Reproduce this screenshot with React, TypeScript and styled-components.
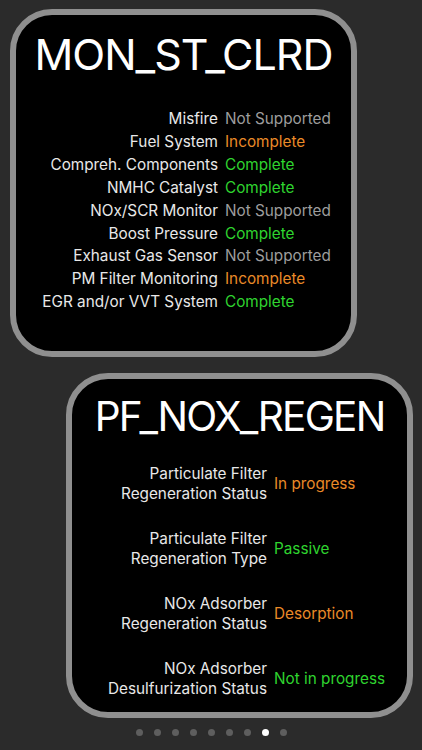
import styled, { createGlobalStyle } from 'styled-components';

const GlobalStyle = createGlobalStyle`
  html, body {
    margin: 0;
    padding: 0;
    background: #2b2b2b;
  }
  body {
    font-family: Inter, "Noto Sans", sans-serif;
    -webkit-font-smoothing: antialiased;
  }
`;

type Status = 'ok' | 'warn' | 'na';

const statusColors: Record<Status, string> = {
  ok: '#2fd42f',
  warn: '#ea8a28',
  na: '#9d9d9d',
};

const Page = styled.div`
  width: 422px;
  height: 750px;
  display: flex;
  flex-direction: column;
  overflow: hidden;
`;

const Card = styled.section<{ $left: number; $top: number; $height: number }>`
  box-sizing: border-box;
  width: 347px;
  height: ${(p) => p.$height}px;
  margin-top: ${(p) => p.$top}px;
  margin-left: ${(p) => p.$left}px;
  border: 6px solid #8f8f8f;
  border-radius: 42px;
  background: #000;
  display: flex;
  flex-direction: column;
  align-items: stretch;
`;

const Title = styled.h1<{ $size: number; $pad: number; $track: number }>`
  margin: 0;
  padding-top: ${(p) => p.$pad}px;
  font-size: ${(p) => p.$size}px;
  line-height: 1;
  font-weight: 400;
  color: #fff;
  text-align: center;
  letter-spacing: ${(p) => p.$track}px;
  white-space: nowrap;
`;

const Table = styled.div<{ $labelWidth: number; $top: number; $gap: number }>`
  display: grid;
  grid-template-columns: ${(p) => p.$labelWidth}px 1fr;
  column-gap: 7px;
  row-gap: ${(p) => p.$gap}px;
  margin-top: ${(p) => p.$top}px;
  align-items: center;
`;

const Label = styled.div<{ $lh: number }>`
  text-align: right;
  color: #e8e8e8;
  font-size: 15.3px;
  line-height: ${(p) => p.$lh}px;
  white-space: pre-line;
`;

const Value = styled.div<{ $status: Status; $lh: number }>`
  color: ${(p) => statusColors[p.$status]};
  font-size: 15.3px;
  line-height: ${(p) => p.$lh}px;
  white-space: nowrap;
`;

const Dots = styled.div`
  display: flex;
  justify-content: center;
  gap: 11px;
  margin-top: 11px;
`;

const Dot = styled.span<{ $active?: boolean }>`
  width: 7px;
  height: 7px;
  border-radius: 50%;
  background: ${(p) => (p.$active ? '#fff' : '#5e5e5e')};
`;

const monitors: [string, string, Status][] = [
  ['Misfire', 'Not Supported', 'na'],
  ['Fuel System', 'Incomplete', 'warn'],
  ['Compreh. Components', 'Complete', 'ok'],
  ['NMHC Catalyst', 'Complete', 'ok'],
  ['NOx/SCR Monitor', 'Not Supported', 'na'],
  ['Boost Pressure', 'Complete', 'ok'],
  ['Exhaust Gas Sensor', 'Not Supported', 'na'],
  ['PM Filter Monitoring', 'Incomplete', 'warn'],
  ['EGR and/or VVT System', 'Complete', 'ok'],
];

const regen: [string, string, Status][] = [
  ['Particulate Filter\nRegeneration Status', 'In progress', 'warn'],
  ['Particulate Filter\nRegeneration Type', 'Passive', 'ok'],
  ['NOx Adsorber\nRegeneration Status', 'Desorption', 'warn'],
  ['NOx Adsorber\nDesulfurization Status', 'Not in progress', 'ok'],
];

export default function App() {
  return (
    <Page>
      <GlobalStyle />
      <Card $left={10} $top={9} $height={348}>
        <Title $size={43} $pad={18} $track={-1}>MON_ST_CLRD</Title>
        <Table $labelWidth={202} $top={32} $gap={0}>
          {monitors.map(([label, value, status]) => (
            <>
              <Label key={label} $lh={22.9}>{label}</Label>
              <Value key={label + '-v'} $status={status} $lh={22.9}>{value}</Value>
            </>
          ))}
        </Table>
      </Card>
      <Card $left={66} $top={16} $height={345}>
        <Title $size={40.5} $pad={18} $track={-1.8}>PF_NOX_REGEN</Title>
        <Table $labelWidth={195} $top={26} $gap={25}>
          {regen.map(([label, value, status]) => (
            <>
              <Label key={label} $lh={20}>{label}</Label>
              <Value key={label + '-v'} $status={status} $lh={20}>{value}</Value>
            </>
          ))}
        </Table>
      </Card>
      <Dots>
        {Array.from({ length: 9 }).map((_, i) => (
          <Dot key={i} $active={i === 7} />
        ))}
      </Dots>
    </Page>
  );
}
